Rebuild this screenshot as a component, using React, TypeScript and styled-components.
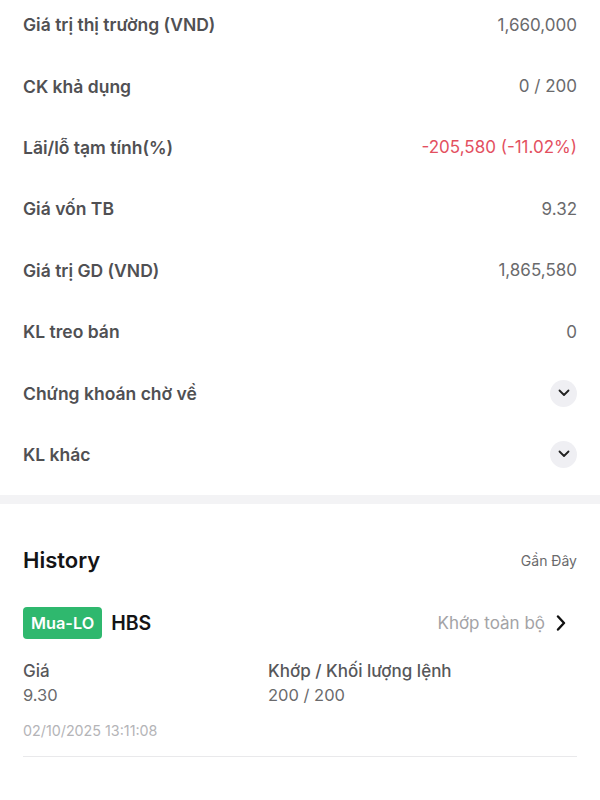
import * as React from "react";
import styled, { createGlobalStyle } from "styled-components";

const GlobalStyle = createGlobalStyle`
  html, body {
    margin: 0;
    padding: 0;
    background: #ffffff;
    font-family: Inter, "Noto Sans", "Liberation Sans", sans-serif;
    -webkit-font-smoothing: antialiased;
  }
`;

const Page = styled.div`
  width: 600px;
  height: 800px;
  overflow: hidden;
  background: #ffffff;
`;

const SummaryList = styled.div`
  margin-top: -6px;
  padding: 0 23px 10px;
`;

const Row = styled.div`
  height: 61.4px;
  display: flex;
  align-items: center;
  justify-content: space-between;
`;

const Label = styled.span`
  font-size: 17.5px;
  font-weight: 600;
  color: #505053;
`;

const Value = styled.span<{ $tone?: "loss" }>`
  font-size: 17px;
  color: ${p => (p.$tone === "loss" ? "#e3505f" : "#6a6a6c")};
`;

const ExpandButton = styled.span`
  width: 27px;
  height: 27px;
  border-radius: 50%;
  background: #efeff3;
  display: flex;
  align-items: center;
  justify-content: center;
`;

const Band = styled.div`
  height: 9px;
  background: #f3f3f5;
`;

const HistorySection = styled.div`
  padding: 42px 23px 0;
`;

const HistoryHeader = styled.div`
  display: flex;
  align-items: center;
  justify-content: space-between;
  height: 28px;
`;

const Title = styled.h2`
  margin: 0;
  font-size: 22px;
  font-weight: 600;
  color: #141416;
`;

const Filter = styled.span`
  font-size: 14px;
  color: #6a6a6c;
`;

const OrderHead = styled.div`
  margin-top: 33px;
  display: flex;
  align-items: center;
  justify-content: space-between;
  height: 32px;
`;

const OrderName = styled.div`
  display: flex;
  align-items: center;
  gap: 9px;
`;

const Badge = styled.span`
  height: 32px;
  padding: 0 8px;
  display: flex;
  align-items: center;
  border-radius: 4px;
  background: #2fb86e;
  color: #ffffff;
  font-size: 16.3px;
  font-weight: 600;
`;

const Symbol = styled.span`
  font-size: 19.5px;
  font-weight: 600;
  color: #141416;
`;

const Status = styled.div`
  display: flex;
  align-items: center;
  gap: 11px;
  margin-right: 11px;
  font-size: 17px;
  color: #a3a3a6;
`;

const DetailGrid = styled.div`
  margin-top: 21px;
  display: grid;
  grid-template-columns: 245px 1fr;
  row-gap: 2px;
`;

const DetailLabel = styled.span`
  font-size: 17px;
  line-height: 22px;
  font-weight: 500;
  color: #57575a;
`;

const DetailValue = styled.span`
  font-size: 16.5px;
  line-height: 22px;
  color: #6a6a6c;
`;

const Timestamp = styled.div`
  margin-top: 16px;
  font-size: 14.3px;
  line-height: 18px;
  color: #b4b4b7;
`;

const Divider = styled.div`
  margin-top: 16px;
  height: 1px;
  background: #e9e9eb;
`;

const ChevronDown = () => (
  <svg width="12" height="8" viewBox="0 0 12 8">
    <path d="M1.5 1.5 L6 6 L10.5 1.5" fill="none" stroke="#222" strokeWidth="1.8" strokeLinecap="round" strokeLinejoin="round" />
  </svg>
);

const ChevronRight = () => (
  <svg width="10" height="16" viewBox="0 0 10 16">
    <path d="M2 1.5 L8 8 L2 14.5" fill="none" stroke="#111" strokeWidth="2.4" strokeLinecap="round" strokeLinejoin="round" />
  </svg>
);

interface ISummaryItem {
  label: string;
  value?: string;
  tone?: "loss";
  expandable?: boolean;
}

const summary: Array<ISummaryItem> = [
  { label: "Giá trị thị trường (VND)", value: "1,660,000" },
  { label: "CK khả dụng", value: "0 / 200" },
  { label: "Lãi/lỗ tạm tính(%)", value: "-205,580 (-11.02%)", tone: "loss" },
  { label: "Giá vốn TB", value: "9.32" },
  { label: "Giá trị GD (VND)", value: "1,865,580" },
  { label: "KL treo bán", value: "0" },
  { label: "Chứng khoán chờ về", expandable: true },
  { label: "KL khác", expandable: true }
];

const App: React.FunctionComponent = () => {
  return (
    <Page>
      <GlobalStyle />
      <SummaryList>
        {summary.map(item => (
          <Row key={item.label}>
            <Label>{item.label}</Label>
            {item.expandable ? (
              <ExpandButton>
                <ChevronDown />
              </ExpandButton>
            ) : (
              <Value $tone={item.tone}>{item.value}</Value>
            )}
          </Row>
        ))}
      </SummaryList>
      <Band />
      <HistorySection>
        <HistoryHeader>
          <Title>History</Title>
          <Filter>Gần Đây</Filter>
        </HistoryHeader>
        <OrderHead>
          <OrderName>
            <Badge>Mua-LO</Badge>
            <Symbol>HBS</Symbol>
          </OrderName>
          <Status>
            Khớp toàn bộ
            <ChevronRight />
          </Status>
        </OrderHead>
        <DetailGrid>
          <DetailLabel>Giá</DetailLabel>
          <DetailLabel>Khớp / Khối lượng lệnh</DetailLabel>
          <DetailValue>9.30</DetailValue>
          <DetailValue>200 / 200</DetailValue>
        </DetailGrid>
        <Timestamp>02/10/2025 13:11:08</Timestamp>
        <Divider />
      </HistorySection>
    </Page>
  );
};

export default App;
